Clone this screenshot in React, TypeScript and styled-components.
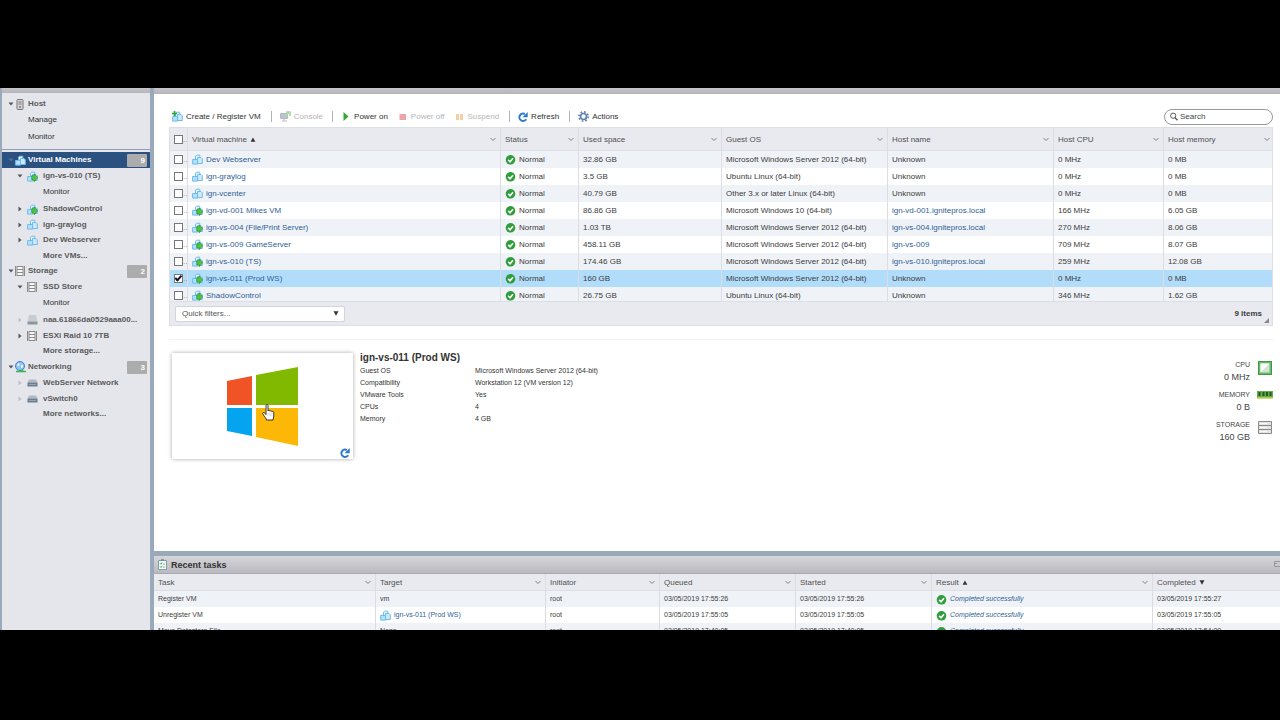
import React, { useState } from "react";
import styled, { createGlobalStyle, css } from "styled-components";

const GlobalStyle = createGlobalStyle`
  *, *::before, *::after { box-sizing: border-box; }
  body { margin: 0; background: #000; font-family: "Liberation Sans", Arial, sans-serif; font-size: 8px; color: #3c3c3c; }
  svg { display: block; flex: none; }
  button, input, select { font: inherit; color: inherit; }
  a { color: #2f5f96; text-decoration: none; }
`;

/* ---------- layout ---------- */

const Screen = styled.div`
  display: grid;
  grid-template-rows: 88px minmax(0, 1fr) 90px;
  height: 100vh;
`;

const Client = styled.div`
  grid-row: 2;
  display: flex;
  min-height: 0;
  background: #9aa9b9;
  overflow: hidden;
  padding-left: 2px;
  gap: 4px;
`;

const Sidebar = styled.nav`
  width: 148px;
  flex: none;
  background: #e4e6ec;
`;

const TitleStrip = styled.div<{ $height: number }>`
  flex: none;
  height: ${(p) => p.$height}px;
  background: linear-gradient(#c4c4ca, #b4b4bb);
`;

const Workspace = styled.div`
  flex: 1;
  min-width: 0;
  display: flex;
  flex-direction: column;
  gap: 5px;
`;

const MainPanel = styled.main`
  flex: 1;
  min-height: 0;
  background: #fff;
  overflow: hidden;
`;

const MainBody = styled.div`
  padding: 12px 7px 0 15px;
`;

/* ---------- navigator ---------- */

const Tree = styled.ul`
  list-style: none;
  margin: 0;
  padding: 3px 0 0;
`;

const TreeRule = styled.li`
  height: 7px;
  padding-top: 4px;
  &::after { content: ""; display: block; height: 1px; background: #8fa0b5; }
`;

const TreeItem = styled.li<{ $depth: number; $leaf?: boolean; $spaced?: boolean; $selected?: boolean }>`
  display: flex;
  align-items: center;
  height: ${(p) => (p.$leaf ? 15 : 16)}px;
  margin-bottom: ${(p) => (p.$spaced ? 2 : 0)}px;
  padding: 0 3px 0 ${(p) => (p.$depth === 0 ? 5 : 14)}px;
  ${(p) => p.$selected && css`background: #2a5180; a { color: #fff; }`}
`;

const Twisty = styled.button`
  width: 8px;
  height: 12px;
  padding: 0;
  border: 0;
  background: none;
  display: grid;
  place-items: center;
  flex: none;
`;

const TreeIcon = styled.span<{ $depth: number }>`
  width: ${(p) => (p.$depth === 0 ? 13 : 19)}px;
  padding-left: ${(p) => (p.$depth === 0 ? 0 : 3)}px;
  display: flex;
  flex: none;
`;

const TreeLink = styled.a<{ $plain?: boolean; $indent?: number }>`
  flex: 1;
  min-width: 0;
  padding-left: ${(p) => p.$indent || 0}px;
  color: ${(p) => (p.$plain ? "#333" : "#5a5a5a")};
  font-weight: ${(p) => (p.$plain ? 400 : 700)};
  line-height: 12px;
  white-space: nowrap;
`;

const Count = styled.span`
  width: 20px;
  height: 13px;
  padding-right: 2px;
  border-radius: 1px;
  background: #acacac;
  color: #fff;
  font-weight: 700;
  line-height: 13px;
  text-align: right;
`;

/* ---------- toolbar ---------- */

const Toolbar = styled.div`
  display: flex;
  align-items: center;
  height: 21px;
  padding-left: 3px;
`;

const ToolButton = styled.button<{ $after?: number }>`
  display: flex;
  align-items: center;
  gap: 3px;
  margin-right: ${(p) => p.$after ?? 10}px;
  padding: 0;
  border: 0;
  background: none;
  color: #333;
  line-height: 12px;
  white-space: nowrap;
  &:disabled { color: #b5b5b5; }
  &:disabled svg { opacity: 0.45; }
`;

const ToolRule = styled.span`
  width: 1px;
  height: 11px;
  margin-right: 8px;
  background: #b4b4b4;
`;

const SearchBox = styled.label`
  display: flex;
  align-items: center;
  gap: 2px;
  width: 109px;
  height: 16px;
  margin-left: auto;
  padding: 0 5px;
  border: 1px solid #9a9a9a;
  border-radius: 8px;
  input {
    min-width: 0;
    flex: 1;
    padding: 0;
    border: 0;
    outline: 0;
    background: none;
  }
  input::placeholder { color: #444; opacity: 1; }
`;

/* ---------- data grids ---------- */

const GridFrame = styled.section`
  border: 1px solid #dcdfe4;
  background: #e8eaef;
`;

const GridScroll = styled.div`
  height: 173px;
  overflow: hidden;
`;

const Grid = styled.table<{ $row: number; $head: number; $small?: boolean }>`
  width: 100%;
  border-collapse: separate;
  border-spacing: 0;
  table-layout: fixed;
  th, td {
    padding: 0 4px;
    text-align: left;
    white-space: nowrap;
    overflow: hidden;
    font-weight: 400;
    border-right: 1px solid #dcdde3;
  }
  th:last-child, td:last-child { border-right: 0; }
  th {
    height: ${(p) => p.$head}px;
    background: #e8eaef;
    color: #505050;
    border-bottom: 1px solid #dcdfe5;
  }
  td {
    height: ${(p) => p.$row}px;
    line-height: 12px;
    font-size: ${(p) => (p.$small ? 7 : 8)}px;
  }
  tbody tr { background: #fff; }
  tbody tr:nth-child(odd) { background: #eff2f7; }
  tbody tr[aria-selected="true"] { background: #b1ddfb; }
`;

const HeadCell = styled.span`
  display: flex;
  align-items: center;
  gap: 3px;
`;

const ColumnMenu = styled.button`
  margin-left: auto;
  padding: 0;
  border: 0;
  background: none;
`;

const IconText = styled.span<{ $gap?: number }>`
  display: flex;
  align-items: center;
  gap: ${(p) => p.$gap ?? 3}px;
`;

const CheckWrap = styled.span`
  display: flex;
  align-items: center;
  margin-right: -4px;
  color: #888;
`;

const Check = styled.input`
  appearance: none;
  width: 9px;
  height: 9px;
  margin: 0;
  flex: none;
  border: 1px solid #777;
  background: #fff;
  display: grid;
  place-items: center;
  &:checked::after {
    content: "";
    width: 7px;
    height: 4px;
    border: solid #111;
    border-width: 0 0 2px 2px;
    transform: rotate(-48deg) translate(1px, -1px);
  }
`;

const GridFooter = styled.div`
  display: flex;
  align-items: center;
  justify-content: space-between;
  height: 24px;
  padding: 0 3px 0 5px;
  border-top: 1px solid #dcdfe5;
`;

const FilterBox = styled.span`
  display: flex;
  align-items: center;
  width: 170px;
  height: 16px;
  padding-right: 5px;
  border: 1px solid #d2d5da;
  border-radius: 2px;
  background: #fff;
  select {
    appearance: none;
    flex: 1;
    padding: 0 6px;
    border: 0;
    outline: 0;
    background: none;
    color: #555;
  }
`;

const ItemCount = styled.span`
  display: flex;
  align-items: flex-end;
  gap: 2px;
  font-weight: 700;
  line-height: 12px;
  svg { margin-bottom: -3px; }
`;

/* ---------- vm summary ---------- */

const Summary = styled.section`
  display: flex;
  align-items: flex-start;
  margin-top: 13px;
  padding: 13px 0 0 3px;
  border-top: 1px solid #f0f1f3;
`;

const Thumbnail = styled.div`
  position: relative;
  display: grid;
  place-items: center;
  width: 181px;
  height: 106px;
  background: #fff;
  box-shadow: 0 0 4px rgba(0, 0, 0, 0.35);
`;

const Reload = styled.button`
  position: absolute;
  right: 3px;
  bottom: 1px;
  padding: 0;
  border: 0;
  background: none;
`;

const Pointer = styled.span`
  position: absolute;
  left: 90px;
  top: 51px;
`;

const Facts = styled.div`
  flex: 1;
  margin-left: 7px;
  h2 { margin: 0; font-size: 10px; line-height: 10px; color: #333; }
  dl {
    display: grid;
    grid-template-columns: 115px 1fr;
    grid-auto-rows: 12px;
    margin: 2px 0 0;
    line-height: 12px;
    font-size: 7px;
    color: #333;
  }
  dd { margin: 0; }
`;

const Meters = styled.ul`
  list-style: none;
  margin: 6px 0 0;
  padding: 0;
`;

const Meter = styled.li`
  display: flex;
  justify-content: flex-end;
  gap: 7px;
  height: 30px;
  text-align: right;
  div { line-height: 12px; font-size: 9px; color: #444; }
  small { display: block; font-size: 7px; }
`;

const MeterIcon = styled.span`
  width: 16px;
  padding-top: 2px;
  display: flex;
  justify-content: center;
  align-items: flex-start;
`;

/* ---------- tasks ---------- */

const Tasks = styled.section`
  flex: none;
  height: 74px;
  overflow: hidden;
  background: #fff;
`;

const TasksTitle = styled.header`
  display: flex;
  align-items: center;
  justify-content: space-between;
  height: 18px;
  padding-left: 4px;
  background: linear-gradient(#d6d6da, #b9b9bf);
  border-bottom: 1px solid #a9aab0;
  h2 { margin: 0; font-size: 9px; line-height: 12px; color: #333; }
`;

/* ---------- drawings ---------- */

const Vm = ({ on, add }: { on?: boolean; add?: boolean }) => (
  <svg width="11" height="11" viewBox="0 0 11 11" fill="#cfeafc" stroke="#6fbcec">
    <path d="M3.500 5V2.200l1-1h3.300V4" fill="#e6f5fe" />
    <path d="M5.500 3.500h3.500l1.300 1.300v4.700H5.500z" />
    <path d="M.6 5.500h5v4.600h-5z" fill="#b5e0fb" />
    {on && <path d="M4.700 4.700h2.500V2.900L10.800 6.600 7.200 10.700V8.800H4.700z" fill="#4cc63f" stroke="#2a8f2e" strokeWidth=".7" />}
    {add && <path d="M2.500 0v5M0 2.500h5" stroke="#2fa53b" strokeWidth="1.700" />}
  </svg>
);

const Ok = () => (
  <svg width="11" height="11" viewBox="0 0 11 11">
    <circle cx="5.500" cy="5.800" r="4.800" fill="#2f9e3a" />
    <path d="M3.200 5.900l1.800 1.800 3-3.500" fill="none" stroke="#fff" strokeWidth="1.600" />
  </svg>
);

const Chevron = () => (
  <svg width="6" height="5" viewBox="0 0 6 5" fill="none" stroke="#808080"><path d="M.5 1L3 3.500 5.500 1" /></svg>
);

const Triangle = ({ down }: { down?: boolean }) => (
  <svg width="6" height="5" viewBox="0 0 6 5" fill="#333"><path d={down ? "M.5 .3h5L3 4.700z" : "M3 .5l2.400 4.300H.6z"} /></svg>
);

const arrowFill = { open: "#555", closed: "#555", faint: "#bcbfc6", dim: "#54759d" };

const TreeArrow = ({ kind }: { kind: keyof typeof arrowFill }) => (
  <svg width="6" height="6" viewBox="0 0 6 6" fill={arrowFill[kind]}>
    <path d={kind === "open" || kind === "dim" ? "M.5 1.500h5L3 4.500z" : "M1.500 .5v5L4.500 3z"} />
  </svg>
);

const HostIcon = () => (
  <svg width="10" height="11" viewBox="-1 0 10 11" stroke="#777">
    <rect x="1" y=".5" width="6" height="10" rx="1" fill="#d4d4d4" />
    <path d="M2.500 3h3M2.500 5h3" /><circle cx="4" cy="8" r=".5" fill="#555" />
  </svg>
);

const Datastore = () => (
  <svg width="10" height="10" viewBox="0 0 10 10">
    <path d="M0 0h10v10H0z" fill="#8b8b8b" />
    <path d="M2.500 1h5v2h-5zM2.500 4h5v2h-5zM2.500 7h5v2h-5z" fill="#f7f7f7" />
    <path d="M1.500 0v10M8.500 0v10" stroke="#d8d8d8" strokeWidth=".6" />
  </svg>
);

const Disk = () => (
  <svg width="11" height="10" viewBox="0 0 11 10">
    <path d="M2 0h7l1.500 6.500H.5z" fill="#c5ccd3" />
    <path d="M.5 6.500h10V9.500H.5z" fill="#8c959d" /><path d="M7.500 8h2" stroke="#5fbf5a" />
  </svg>
);

const SwitchIcon = () => (
  <svg width="11" height="8" viewBox="0 0 11 8">
    <path d="M2 .5h7l1.500 3H.5z" fill="#b0bac4" /><path d="M.5 3.500h10v4H.5z" fill="#6d7d8d" />
    <path d="M2 5.500h7" stroke="#a9b5c1" strokeWidth=".7" />
  </svg>
);

const Globe = () => (
  <svg width="11" height="12" viewBox="0 0 11 12" fill="none">
    <circle cx="5" cy="5" r="4.500" fill="#8fc3f2" stroke="#3f7fd0" />
    <path d="M3 2.500c2-1 2 1 1.200 2S2.500 5.500 2 4.500zM6 4c1.500-.8 2.500 0 2 1.500S6.500 7.500 6 6.500z" fill="#e6f4ff" />
    <path d="M1 10.500h10M7.500 8v2" stroke="#3bb54a" strokeWidth="1.500" />
  </svg>
);

const ConsoleIcon = () => (
  <svg width="11" height="11" viewBox="0 0 11 11">
    <path d="M.5 2.500h7v5h-7z" fill="#5f7f9f" stroke="#666" /><path d="M4 7.500v2M2 10h5" stroke="#666" />
    <path d="M5 5.500L9 1.500M6 1h4v4" stroke="#3fae3a" strokeWidth="1.700" fill="none" />
  </svg>
);

const RefreshIcon = () => (
  <svg width="10" height="10" viewBox="0 0 10 10">
    <path d="M8.200 7.300A3.700 3.700 0 1 1 6.800 2" fill="none" stroke="#2c79cc" strokeWidth="2" />
    <path d="M9.700 0v5.200H4.600z" fill="#2c79cc" />
  </svg>
);

const Gear = () => (
  <svg width="11" height="11" viewBox="0 0 11 11" fill="none" stroke="#5f83b0">
    <circle cx="5.500" cy="5.500" r="3" strokeWidth="1.700" />
    <circle cx="5.500" cy="5.500" r="4.600" strokeWidth="1.700" strokeDasharray="1.700 1.912" />
  </svg>
);

const WindowsLogo = () => (
  <svg width="72" height="79" viewBox="0 0 72 79">
    <path d="M0 14L25 9v29H0z" fill="#ef5326" /><path d="M29 8L71 0v38H29z" fill="#80b900" />
    <path d="M0 41h25v28L0 64z" fill="#05a4ee" /><path d="M29 41h42v38L29 70z" fill="#fdb807" />
  </svg>
);

const Hand = () => (
  <svg width="13" height="17" viewBox="0 0 13 17">
    <path d="M4 1.500c0-1.300 2-1.300 2 0V7c.3-.8 1.800-.8 2 .2.400-.7 1.700-.6 1.900.5.600-.6 1.900-.3 1.900.8V12c0 1.500-.8 2.200-.8 4H4.500c0-1.500-1.500-2.500-3.700-6C.3 8.800 1.800 8 2.800 9.300L4 10.500z" fill="#fff" stroke="#222" strokeWidth=".9" />
    <path d="M6 9v3M8 9v3M10 9v3" stroke="#999" strokeWidth=".4" />
  </svg>
);

const CpuIcon = () => (
  <svg width="14" height="14" viewBox="0 0 14 14">
    <path d="M0 0h14v14H0z" fill="#3f9a48" /><path d="M1 1h12v12H1z" fill="#69b96c" />
    <path d="M2.500 2.500h9v9h-9z" fill="#d5e2d6" /><path d="M2.500 2.500h9l-9 9z" fill="#fbfdfb" />
  </svg>
);

const MemoryIcon = () => (
  <svg width="16" height="8" viewBox="0 0 16 8">
    <path d="M0 0h16v7H0z" fill="#5fae46" />
    <path d="M1.500 1h2v4h-2zM5.500 1h2v4h-2zM9 1h2v4H9zM12.500 1h2v4h-2z" fill="#2b5228" />
    <path d="M0 7h16" stroke="#c2cf55" strokeWidth="1.500" />
  </svg>
);

const StorageIcon = () => (
  <svg width="14" height="13" viewBox="0 0 14 13" fill="#e3e3e3" stroke="#8a8a8a">
    <path d="M.5 .5h13v4H.5zM.5 4.500h13v4H.5zM.5 8.500h13v4H.5z" />
    <path d="M2 2.500h7M2 6.500h7M2 10.500h7" stroke="#f8f8f8" />
  </svg>
);

const TaskIcon = () => (
  <svg width="9" height="11" viewBox="0 0 9 11" fill="none">
    <path d="M.5 1.500h8v9h-8z" fill="#f4faf6" stroke="#7ea2a6" /><path d="M3 1h3" stroke="#6a8c90" strokeWidth="1.500" />
    <path d="M2 4.200l1 1 1.200-1.700M2 7.500l1 1 1.200-1.700" stroke="#38a04a" strokeWidth=".9" /><path d="M5 5h2M5 8h2" stroke="#88a" strokeWidth=".8" />
  </svg>
);

/* ---------- data ---------- */

interface Node {
  label: string; depth: number; icon?: React.ReactNode; arrow?: keyof typeof arrowFill;
  leaf?: boolean; plain?: boolean; spaced?: boolean; selected?: boolean; count?: number;
}

const hostNodes: Node[] = [
  { label: "Host", depth: 0, icon: <HostIcon />, arrow: "open" },
  { label: "Manage", depth: 0, plain: true, leaf: true, spaced: true },
  { label: "Monitor", depth: 0, plain: true },
];

const inventoryNodes: Node[] = [
  { label: "Virtual Machines", depth: 0, icon: <Vm />, arrow: "dim", selected: true, count: 9 },
  { label: "ign-vs-010 (TS)", depth: 1, icon: <Vm on />, arrow: "open" },
  { label: "Monitor", depth: 1, plain: true, leaf: true, spaced: true },
  { label: "ShadowControl", depth: 1, icon: <Vm on />, arrow: "closed" },
  { label: "ign-graylog", depth: 1, icon: <Vm />, arrow: "closed", leaf: true },
  { label: "Dev Webserver", depth: 1, icon: <Vm />, arrow: "closed" },
  { label: "More VMs...", depth: 1, leaf: true },
  { label: "Storage", depth: 0, icon: <Datastore />, arrow: "open", count: 2 },
  { label: "SSD Store", depth: 1, icon: <Datastore />, arrow: "open" },
  { label: "Monitor", depth: 1, plain: true, leaf: true, spaced: true },
  { label: "naa.61866da0529aaa00...", depth: 1, icon: <Disk />, arrow: "faint" },
  { label: "ESXi Raid 10 7TB", depth: 1, icon: <Datastore />, arrow: "closed", leaf: true },
  { label: "More storage...", depth: 1 },
  { label: "Networking", depth: 0, icon: <Globe />, arrow: "open", count: 3 },
  { label: "WebServer Network", depth: 1, icon: <SwitchIcon />, arrow: "faint" },
  { label: "vSwitch0", depth: 1, icon: <SwitchIcon />, arrow: "faint", leaf: true },
  { label: "More networks...", depth: 1, leaf: true },
];

const W2012 = "Microsoft Windows Server 2012 (64-bit)";

const vms = [
  { name: "Dev Webserver", on: false, used: "32.86 GB", os: W2012, host: "Unknown", cpu: "0 MHz", mem: "0 MB" },
  { name: "ign-graylog", on: false, used: "3.5 GB", os: "Ubuntu Linux (64-bit)", host: "Unknown", cpu: "0 MHz", mem: "0 MB" },
  { name: "ign-vcenter", on: false, used: "40.79 GB", os: "Other 3.x or later Linux (64-bit)", host: "Unknown", cpu: "0 MHz", mem: "0 MB" },
  { name: "ign-vd-001 Mikes VM", on: true, used: "86.86 GB", os: "Microsoft Windows 10 (64-bit)", host: "ign-vd-001.ignitepros.local", cpu: "166 MHz", mem: "6.05 GB" },
  { name: "ign-vs-004 (File/Print Server)", on: true, used: "1.03 TB", os: W2012, host: "ign-vs-004.ignitepros.local", cpu: "270 MHz", mem: "8.06 GB" },
  { name: "ign-vs-009 GameServer", on: true, used: "458.11 GB", os: W2012, host: "ign-vs-009", cpu: "709 MHz", mem: "8.07 GB" },
  { name: "ign-vs-010 (TS)", on: true, used: "174.46 GB", os: W2012, host: "ign-vs-010.ignitepros.local", cpu: "259 MHz", mem: "12.08 GB" },
  { name: "ign-vs-011 (Prod WS)", on: true, used: "160 GB", os: W2012, host: "Unknown", cpu: "0 MHz", mem: "0 MB" },
  { name: "ShadowControl", on: true, used: "26.75 GB", os: "Ubuntu Linux (64-bit)", host: "Unknown", cpu: "346 MHz", mem: "1.62 GB" },
];

const vmColumns = ["Virtual machine", "Status", "Used space", "Guest OS", "Host name", "Host CPU", "Host memory"];
const vmWidths = [18, 313, 78, 143, 166, 166, 110, 110];

const facts = [
  ["Guest OS", W2012],
  ["Compatibility", "Workstation 12 (VM version 12)"],
  ["VMware Tools", "Yes"],
  ["CPUs", "4"],
  ["Memory", "4 GB"],
];

const meters = [
  { label: "CPU", value: "0 MHz", icon: <CpuIcon /> },
  { label: "MEMORY", value: "0 B", icon: <MemoryIcon /> },
  { label: "STORAGE", value: "160 GB", icon: <StorageIcon /> },
];

const taskColumns = ["Task", "Target", "Initiator", "Queued", "Started", "Result", "Completed"];
const taskWidths = [222, 170, 114, 136, 136, 221, 127];
const tasks = [
  { task: "Register VM", target: "vm", link: false, queued: "03/05/2019 17:55:26", started: "03/05/2019 17:55:26", done: "03/05/2019 17:55:27" },
  { task: "Unregister VM", target: "ign-vs-011 (Prod WS)", link: true, queued: "03/05/2019 17:55:05", started: "03/05/2019 17:55:05", done: "03/05/2019 17:55:05" },
  { task: "Move Datastore File", target: "None", link: false, queued: "03/05/2019 17:49:05", started: "03/05/2019 17:49:05", done: "03/05/2019 17:54:09" },
];

/* ---------- components ---------- */

const TreeRow = ({ node }: { node: Node }) => (
  <TreeItem $depth={node.depth} $leaf={node.leaf} $spaced={node.spaced} $selected={node.selected}>
    {node.arrow && (
      <Twisty aria-label={`Toggle ${node.label}`}>
        <TreeArrow kind={node.arrow} />
      </Twisty>
    )}
    {node.icon && <TreeIcon $depth={node.depth}>{node.icon}</TreeIcon>}
    <TreeLink href="#" $plain={node.plain} $indent={node.icon ? 0 : node.depth === 0 ? 21 : 27}>{node.label}</TreeLink>
    {node.count !== undefined && <Count>{node.count}</Count>}
  </TreeItem>
);

const Columns = ({ widths }: { widths: number[] }) => (
  <colgroup>{widths.map((w, i) => <col key={i} width={w} />)}</colgroup>
);

const Head = ({ label, sort, menu = true }: { label: string; sort?: "up" | "down"; menu?: boolean }) => (
  <th scope="col">
    <HeadCell>
      {label}
      {sort && <Triangle down={sort === "down"} />}
      {menu && <ColumnMenu aria-label={`${label} column menu`}><Chevron /></ColumnMenu>}
    </HeadCell>
  </th>
);

export default function App() {
  const [selected, setSelected] = useState<string | null>("ign-vs-011 (Prod WS)");
  return (
    <>
      <GlobalStyle />
      <Screen>
        <Client>
          <Sidebar aria-label="Navigator">
            <TitleStrip $height={5} />
            <Tree>
              {hostNodes.map((n) => <TreeRow key={n.label} node={n} />)}
              <TreeRule />
              {inventoryNodes.map((n, i) => <TreeRow key={i} node={n} />)}
            </Tree>
          </Sidebar>
          <Workspace>
            <MainPanel>
              <TitleStrip $height={6} />
              <MainBody>
                <Toolbar role="toolbar">
                  <ToolButton><Vm add />Create / Register VM</ToolButton>
                  <ToolRule />
                  <ToolButton disabled $after={9}><ConsoleIcon />Console</ToolButton>
                  <ToolRule />
                  <ToolButton>
                    <svg width="10" height="9" viewBox="0 0 10 9"><path d="M2.500 0l5 4.500-5 4.500z" fill="#35a832" /></svg>Power on
                  </ToolButton>
                  <ToolButton disabled>
                    <svg width="10" height="8" viewBox="0 0 10 8"><path d="M1.500 1h6.500v6H1.500z" fill="#dc3545" /></svg>Power off
                  </ToolButton>
                  <ToolButton disabled>
                    <svg width="10" height="8" viewBox="0 0 10 8"><path d="M1 1h3v6H1zM5 1h3v6H5z" fill="#e89b35" /></svg>Suspend
                  </ToolButton>
                  <ToolRule />
                  <ToolButton><RefreshIcon />Refresh</ToolButton>
                  <ToolRule />
                  <ToolButton><Gear />Actions</ToolButton>
                  <SearchBox>
                    <svg width="8" height="9" viewBox="0 0 8 9" fill="none" stroke="#555"><circle cx="3.200" cy="3.700" r="2.600" /><path d="M5 5.700l2.500 2.500" strokeWidth="1.300" /></svg>
                    <input type="text" placeholder="Search" aria-label="Search" />
                  </SearchBox>
                </Toolbar>
                <GridFrame>
                  <GridScroll>
                    <Grid $row={17} $head={23}>
                      <Columns widths={vmWidths} />
                      <thead>
                        <tr>
                          <th scope="col"><CheckWrap><Check type="checkbox" aria-label="Select all" />..</CheckWrap></th>
                          {vmColumns.map((c, i) => <Head key={c} label={c} sort={i === 0 ? "up" : undefined} />)}
                        </tr>
                      </thead>
                      <tbody>
                        {vms.map((vm) => (
                          <tr key={vm.name} aria-selected={vm.name === selected}>
                            <td>
                              <CheckWrap>
                                <Check
                                  type="checkbox"
                                  aria-label={`Select ${vm.name}`}
                                  checked={vm.name === selected}
                                  onChange={() => setSelected(vm.name === selected ? null : vm.name)}
                                />..
                              </CheckWrap>
                            </td>
                            <td><IconText><Vm on={vm.on} /><a href="#">{vm.name}</a></IconText></td>
                            <td><IconText><Ok />Normal</IconText></td>
                            <td>{vm.used}</td>
                            <td>{vm.os}</td>
                            <td>{vm.host === "Unknown" ? vm.host : <a href="#">{vm.host}</a>}</td>
                            <td>{vm.cpu}</td>
                            <td>{vm.mem}</td>
                          </tr>
                        ))}
                      </tbody>
                    </Grid>
                  </GridScroll>
                  <GridFooter>
                    <FilterBox>
                      <select aria-label="Quick filters"><option>Quick filters...</option></select>
                      <Triangle down />
                    </FilterBox>
                    <ItemCount>
                      9 items
                      <svg width="5" height="5" viewBox="0 0 5 5"><path d="M5 0v5H0z" fill="#888" /></svg>
                    </ItemCount>
                  </GridFooter>
                </GridFrame>
                <Summary>
                  <Thumbnail>
                    <WindowsLogo />
                    <Pointer><Hand /></Pointer>
                    <Reload aria-label="Refresh thumbnail"><RefreshIcon /></Reload>
                  </Thumbnail>
                  <Facts>
                    <h2>ign-vs-011 (Prod WS)</h2>
                    <dl>
                      {facts.map(([k, v]) => <React.Fragment key={k}><dt>{k}</dt><dd>{v}</dd></React.Fragment>)}
                    </dl>
                  </Facts>
                  <Meters>
                    {meters.map((m) => (
                      <Meter key={m.label}>
                        <div><small>{m.label}</small>{m.value}</div>
                        <MeterIcon>{m.icon}</MeterIcon>
                      </Meter>
                    ))}
                  </Meters>
                </Summary>
              </MainBody>
            </MainPanel>
            <Tasks>
              <TasksTitle>
                <IconText $gap={4}><TaskIcon /><h2>Recent tasks</h2></IconText>
                <svg width="6" height="7" viewBox="0 0 6 7" fill="none" stroke="#9a9aa0"><path d="M6 .5H.5v5H6M.5 2.500H3" /></svg>
              </TasksTitle>
              <Grid $row={16} $head={17} $small>
                <Columns widths={taskWidths} />
                <thead>
                  <tr>
                    {taskColumns.map((c) => (
                      <Head key={c} label={c} menu={c !== "Completed"} sort={c === "Result" ? "up" : c === "Completed" ? "down" : undefined} />
                    ))}
                  </tr>
                </thead>
                <tbody>
                  {tasks.map((t) => (
                    <tr key={t.task}>
                      <td>{t.task}</td>
                      <td>{t.link ? <IconText><Vm /><a href="#">{t.target}</a></IconText> : t.target}</td>
                      <td>root</td>
                      <td>{t.queued}</td>
                      <td>{t.started}</td>
                      <td><IconText><Ok /><a href="#"><em>Completed successfully</em></a></IconText></td>
                      <td>{t.done}</td>
                    </tr>
                  ))}
                </tbody>
              </Grid>
            </Tasks>
          </Workspace>
        </Client>
      </Screen>
    </>
  );
}
